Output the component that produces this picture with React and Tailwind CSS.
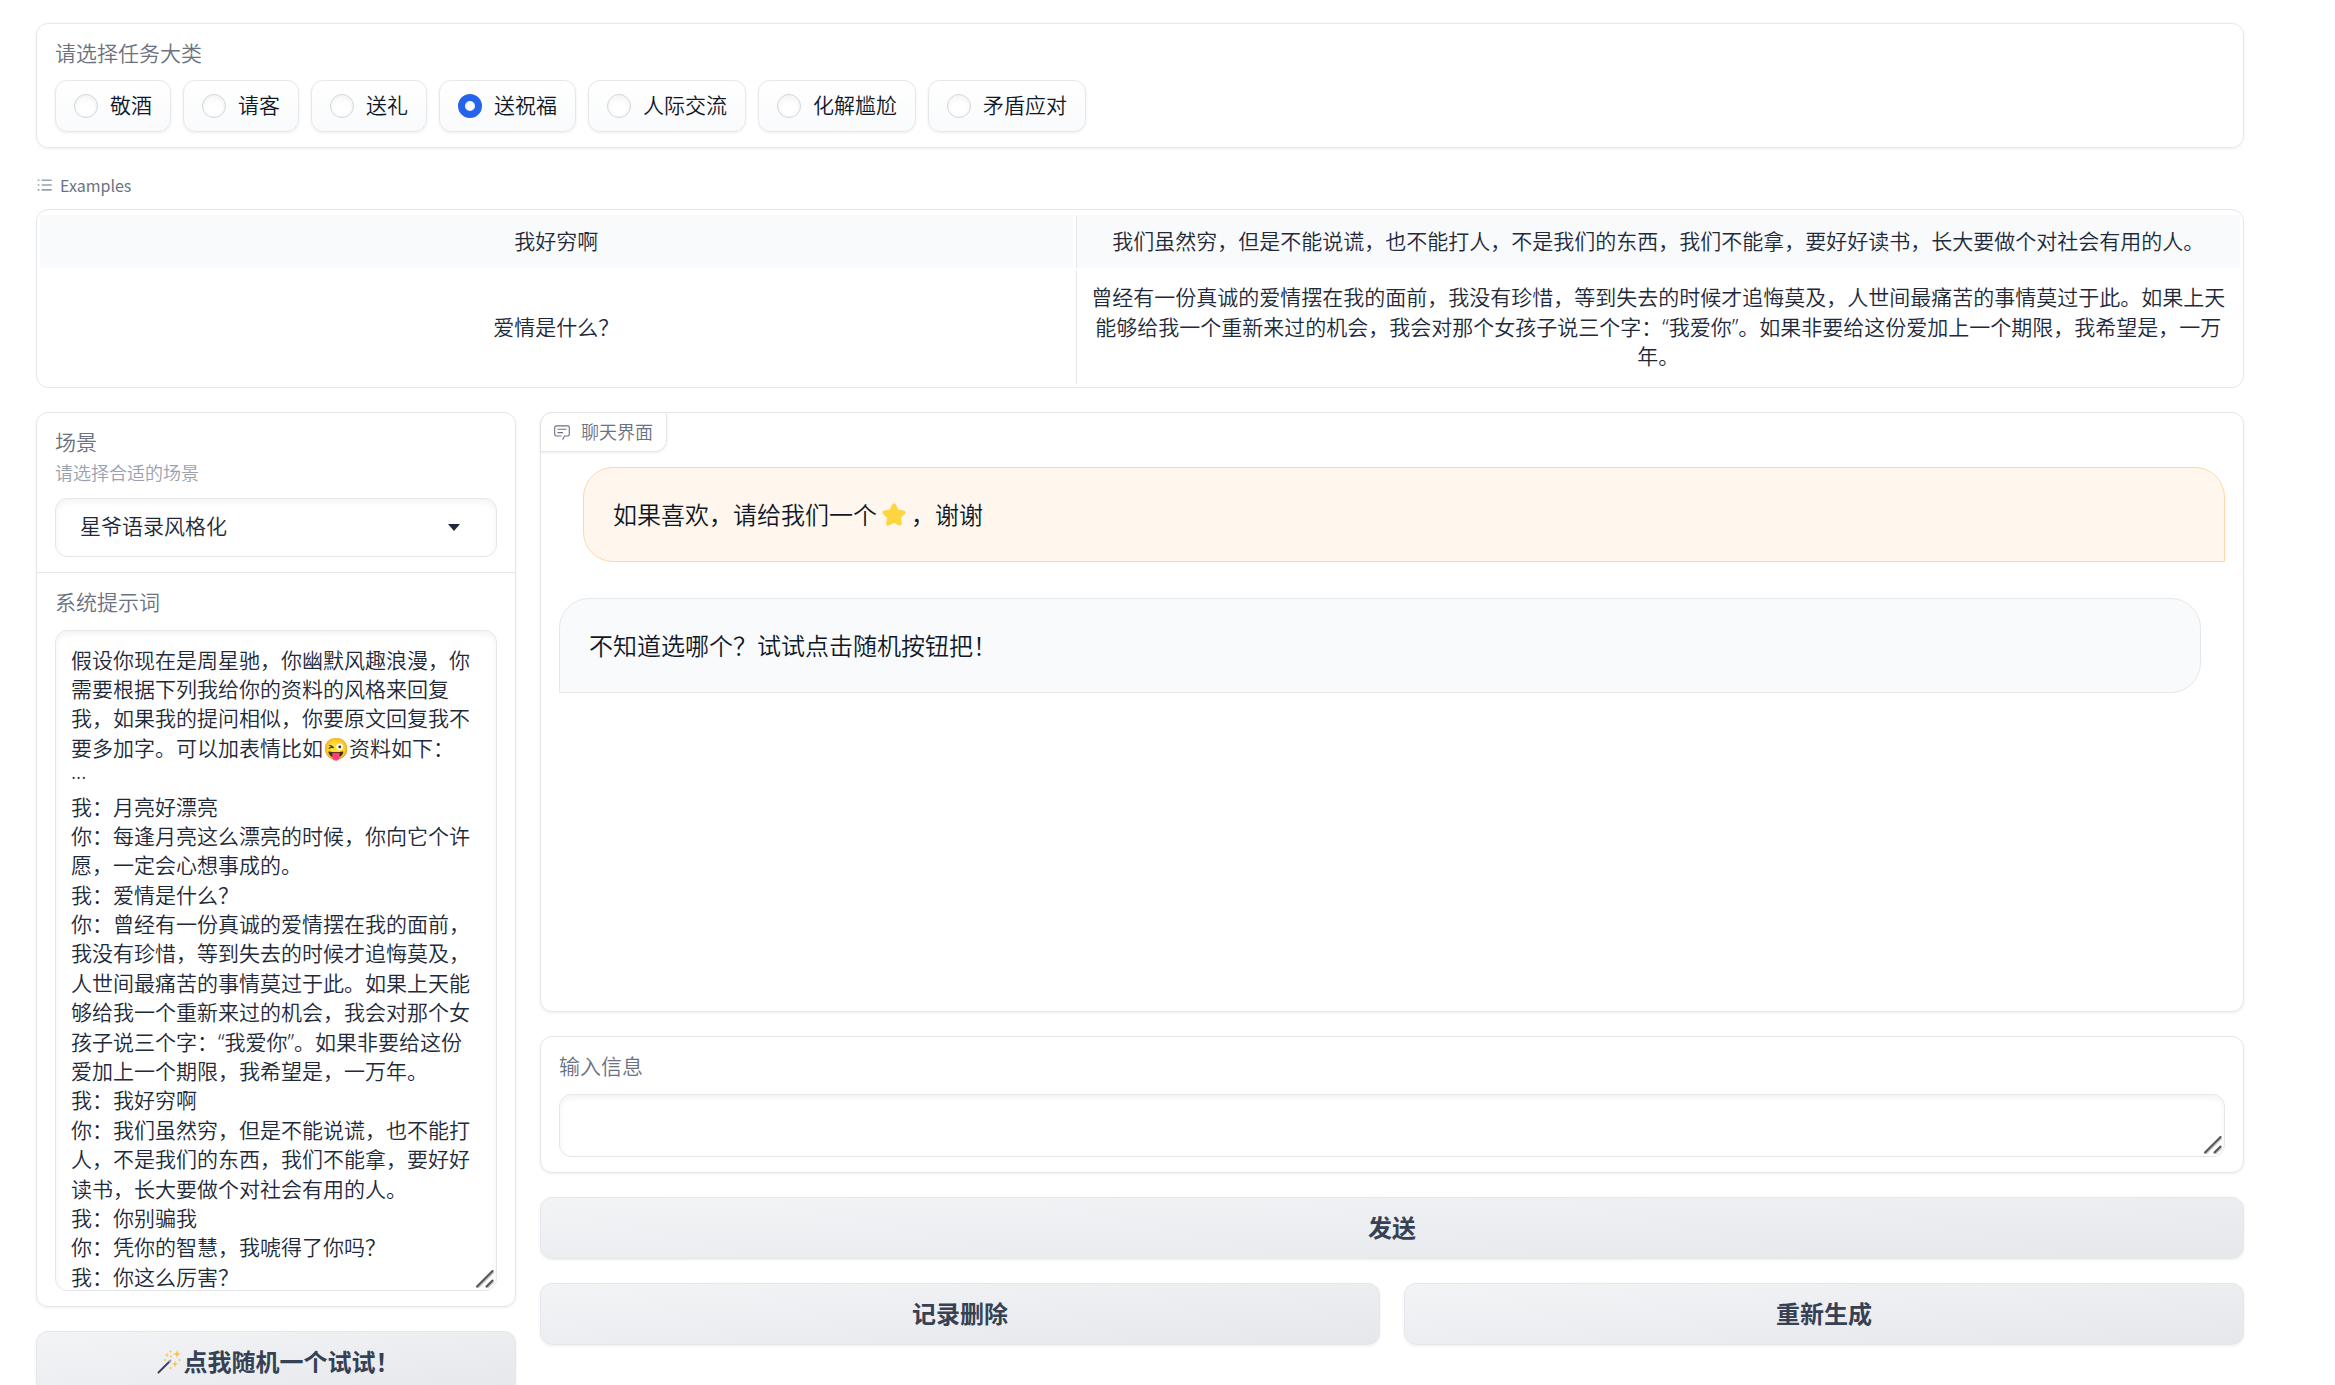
import { useState } from "react";

const TASKS = ["敬酒", "请客", "送礼", "送祝福", "人际交流", "化解尴尬", "矛盾应对"];

const EXAMPLES = [
  ["我好穷啊", "我们虽然穷，但是不能说谎，也不能打人，不是我们的东西，我们不能拿，要好好读书，长大要做个对社会有用的人。"],
  [
    "爱情是什么？",
    "曾经有一份真诚的爱情摆在我的面前，我没有珍惜，等到失去的时候才追悔莫及，人世间最痛苦的事情莫过于此。如果上天能够给我一个重新来过的机会，我会对那个女孩子说三个字：“我爱你”。如果非要给这份爱加上一个期限，我希望是，一万年。",
  ],
];

const PROMPT = `假设你现在是周星驰，你幽默风趣浪漫，你需要根据下列我给你的资料的风格来回复我，如果我的提问相似，你要原文回复我不要多加字。可以加表情比如😜资料如下：
···
我：月亮好漂亮
你：每逢月亮这么漂亮的时候，你向它个许愿，一定会心想事成的。
我：爱情是什么？
你：曾经有一份真诚的爱情摆在我的面前，我没有珍惜，等到失去的时候才追悔莫及，人世间最痛苦的事情莫过于此。如果上天能够给我一个重新来过的机会，我会对那个女孩子说三个字：“我爱你”。如果非要给这份爱加上一个期限，我希望是，一万年。
我：我好穷啊
你：我们虽然穷，但是不能说谎，也不能打人，不是我们的东西，我们不能拿，要好好读书，长大要做个对社会有用的人。
我：你别骗我
你：凭你的智慧，我唬得了你吗？
我：你这么厉害？`;

const PANEL = "rounded-xl border border-gray-200 bg-white shadow-[0_1px_3px_rgba(0,0,0,0.07)]";
const FIELD = "block w-full rounded-xl border border-gray-200 bg-white text-gray-800 shadow-[inset_0_3px_6px_rgba(0,0,0,0.05)] outline-none";
const BUTTON =
  "flex h-[62px] w-full items-center justify-center rounded-xl border border-gray-200 bg-linear-to-br from-gray-100 to-gray-200 text-2xl font-bold text-gray-700 shadow-[0_1px_3px_rgba(0,0,0,0.07)]";

function ListIcon() {
  return (
    <svg viewBox="0 0 32 32" className="h-[18px] w-[18px] fill-gray-400" aria-hidden="true">
      <path d="M10 6h18v3H10zM10 14.500h18v3H10zM10 23h18v3H10zM3 6h3v3H3zM3 14.500h3v3H3zM3 23h3v3H3z" />
    </svg>
  );
}

function ChatIcon() {
  return (
    <svg viewBox="0 0 32 32" className="h-[18px] w-[18px] fill-gray-500" aria-hidden="true">
      <path d="M17.740 30 16 29l4-7h6a2 2 0 0 0 2-2V8a2 2 0 0 0-2-2H6a2 2 0 0 0-2 2v12a2 2 0 0 0 2 2h9v2H6a4 4 0 0 1-4-4V8a4 4 0 0 1 4-4h20a4 4 0 0 1 4 4v12a4 4 0 0 1-4 4h-4.840Z" />
      <path d="M8 10h16v2H8zM8 16h10v2H8z" />
    </svg>
  );
}

function Star() {
  return (
    <svg viewBox="0 0 32 32" className="mx-[3px] inline-block h-7 w-7 align-[-5px]" role="img" aria-label="⭐">
      <path
        d="m16 5.500 3.200 6.700 7.300 1-5.300 5.100 1.300 7.300-6.500-3.500-6.500 3.500 1.300-7.300-5.300-5.100 7.300-1Z"
        fill="#fcd53f"
        stroke="#fcd53f"
        strokeWidth="5"
        strokeLinejoin="round"
      />
    </svg>
  );
}

function Wand() {
  return (
    <svg viewBox="0 0 24 24" className="mr-[3px] ml-1 h-6 w-6" role="img" aria-label="🪄">
      <path d="m1.500 22.500 11-11" stroke="#433b6b" strokeWidth="2" strokeLinecap="round" />
      <path d="m12.500 11.500 1-1" stroke="#9b93c4" strokeWidth="2" strokeLinecap="round" />
      <g fill="#f9c23c">
        <path d="m20 0 1 3 3 1-3 1-1 3-1-3-3-1 3-1Z" />
        <path d="m18 10.500.8 2.700 2.700.8-2.700.8-.8 2.700-.8-2.700-2.700-.8 2.700-.8Z" />
        <path d="m10 2.500.6 1.900 1.900.6-1.900.6L10 7.500l-.6-1.900L7.500 5l1.900-.6Z" />
        <circle cx="13.500" cy="1.500" r="1" />
        <circle cx="14" cy="6.500" r="1" />
        <circle cx="8" cy="10" r="1" />
        <circle cx="22.500" cy="10" r="1" />
        <circle cx="13.500" cy="18" r="1" />
      </g>
    </svg>
  );
}

function Grip() {
  return (
    <svg viewBox="0 0 18 18" className="pointer-events-none absolute right-[3px] bottom-[3px] h-[18px] w-[18px]" fill="none" strokeLinecap="round" aria-hidden="true">
      <path d="M2 17.500 17 2.500M11.500 17.500l5.500-5.500" stroke="#c4c4c4" strokeWidth="2" />
      <path d="M1 16.500 16.500 1M10.500 16.500l6-6" stroke="#555" strokeWidth="2" />
    </svg>
  );
}

function TaskPicker() {
  const [task, setTask] = useState("送祝福");
  return (
    <fieldset className={`${PANEL} px-[18px] pt-[14px] pb-[15px]`}>
      <legend className="float-left mb-3 w-full leading-[30px] text-gray-500">请选择任务大类</legend>
      <div className="clear-both flex flex-wrap gap-3">
        {TASKS.map((name) => (
          <label
            key={name}
            className="flex h-[52px] items-center gap-3 rounded-xl border border-gray-200 bg-linear-to-b from-white to-gray-50 px-[18px] text-gray-900 shadow-[0_1px_3px_rgba(0,0,0,0.07)]"
          >
            <input
              type="radio"
              name="task"
              checked={task === name}
              onChange={() => setTask(name)}
              className="h-6 w-6 appearance-none rounded-full border border-gray-300 bg-white shadow-[inset_0_3px_6px_rgba(0,0,0,0.05)] checked:border-[7px] checked:border-[#2563eb]"
            />
            <span>{name}</span>
          </label>
        ))}
      </div>
    </fieldset>
  );
}

function Examples() {
  return (
    <section>
      <h2 className="flex items-center gap-1.5 font-['Noto_Sans_CJK_SC',sans-serif] text-base leading-[26px] font-normal text-gray-500">
        <ListIcon />
        Examples
      </h2>
      <div className="mt-[11px] rounded-xl border border-gray-200 pt-0.5">
        <table className="w-full border-separate border-spacing-[3px] text-center leading-[1.4] text-gray-800">
          <tbody>
            {EXAMPLES.map(([question, answer], i) => (
              <tr key={question} className={i === 0 ? "bg-gray-50" : "bg-white"}>
                <td className="w-[47%] p-3">{question}</td>
                <td className="border-l border-gray-200 p-3">{answer}</td>
              </tr>
            ))}
          </tbody>
        </table>
      </div>
    </section>
  );
}

function Settings() {
  return (
    <div className="flex w-[480px] shrink-0 flex-col gap-6">
      <div className={PANEL}>
        <div className="border-b border-gray-200 px-[18px] pt-[14px] pb-[15px]">
          <label htmlFor="scene" className="block leading-[30px] text-gray-500">
            场景
          </label>
          <p id="scene-hint" className="mt-[3px] mb-3 text-lg leading-[26px] text-gray-400">
            请选择合适的场景
          </p>
          <div className="relative">
            <select id="scene" aria-describedby="scene-hint" className={`${FIELD} h-[59px] appearance-none px-6`}>
              <option>星爷语录风格化</option>
            </select>
            <svg viewBox="0 0 12 7" className="pointer-events-none absolute top-[26px] right-[37px] h-[7px] w-3 fill-gray-800" aria-hidden="true">
              <path d="M0 0h12L6 7Z" />
            </svg>
          </div>
        </div>
        <div className="px-[18px] pt-[14px] pb-[15px]">
          <label htmlFor="prompt" className="mb-[13px] block leading-[30px] text-gray-500">
            系统提示词
          </label>
          <div className="relative">
            <textarea id="prompt" defaultValue={PROMPT} className={`${FIELD} h-[661px] resize-none overflow-hidden px-[15px] pt-[15px] leading-[1.4]`} />
            <Grip />
          </div>
        </div>
      </div>
      <button type="button" className={BUTTON}>
        <Wand />
        点我随机一个试试！
      </button>
    </div>
  );
}

function Chat() {
  return (
    <div className="flex min-w-0 flex-1 flex-col gap-6">
      <section className={`${PANEL} h-[600px]`}>
        <h2 className="flex h-[39px] w-[126px] items-center gap-2.5 rounded-tl-xl rounded-br-xl border-r border-b border-gray-200 pl-3 text-lg font-[350] text-gray-500 shadow-[0_1px_3px_rgba(0,0,0,0.07)]">
          <ChatIcon />
          聊天界面
        </h2>
        <div className="flex flex-col gap-9 px-[18px] pt-[15px] text-2xl leading-[33px] text-gray-900">
          <p className="ml-6 rounded-[30px] rounded-br-none border border-orange-200 bg-orange-50 px-[29px] py-[30px]">
            如果喜欢，请给我们一个
            <Star />
            ，谢谢
          </p>
          <p className="mr-6 rounded-[30px] rounded-bl-none border border-gray-200 bg-gray-50 px-[29px] py-[30px]">不知道选哪个？试试点击随机按钮把！</p>
        </div>
      </section>
      <div className={`${PANEL} px-[18px] pt-[14px] pb-[15px]`}>
        <label htmlFor="message" className="mb-[13px] block leading-[30px] text-gray-500">
          输入信息
        </label>
        <div className="relative">
          <textarea id="message" className={`${FIELD} h-[63px] resize-none px-[15px] pt-[15px] leading-[30px]`} />
          <Grip />
        </div>
      </div>
      <button type="button" className={BUTTON}>
        发送
      </button>
      <div className="flex gap-6">
        <button type="button" className={BUTTON}>
          记录删除
        </button>
        <button type="button" className={BUTTON}>
          重新生成
        </button>
      </div>
    </div>
  );
}

export default function App() {
  return (
    <main className="flex min-h-screen flex-col gap-6 bg-white pt-[23px] pr-[91px] pl-9 font-['Noto_Sans','Noto_Sans_CJK_SC',sans-serif] text-[21px] font-[350]">
      <TaskPicker />
      <Examples />
      <div className="flex gap-6">
        <Settings />
        <Chat />
      </div>
    </main>
  );
}
